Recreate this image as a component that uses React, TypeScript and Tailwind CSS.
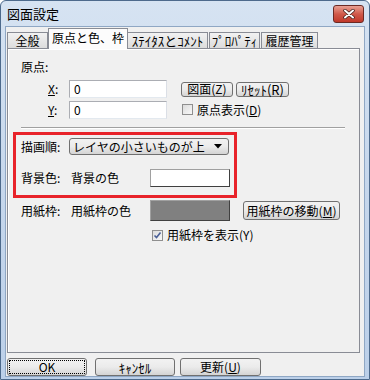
const jp = "font-['Noto_Sans_CJK_JP',sans-serif]"

function Btn({ children, className = '' }: { children: React.ReactNode; className?: string }) {
  return (
    <div
      className={`flex items-center justify-center whitespace-nowrap rounded-[3px] border border-[#707070] bg-gradient-to-b from-[#f2f2f2] via-[#ebebeb] to-[#d4d4d4] text-[12px] leading-none text-black ${className}`}
    >
      {children}
    </div>
  )
}

function Check({ checked }: { checked?: boolean }) {
  return (
    <div className="flex h-[11px] w-[11px] items-center justify-center border border-[#8f8f8f] bg-gradient-to-br from-[#dcdcdc] to-[#f8f8f8]">
      {checked && (
        <svg width="9" height="9" viewBox="0 0 9 9">
          <path d="M1.5 4.5 L3.5 6.5 L7.5 1.5" fill="none" stroke="#4a5f97" strokeWidth="1.6" />
        </svg>
      )}
    </div>
  )
}

function Input({ value }: { value: string }) {
  return (
    <div className="flex h-[18px] w-[98px] items-center border border-[#abadb3] border-b-[#e3e9ef] border-r-[#dbdfe6] bg-white pl-[4px] text-[12px] leading-none">
      {value}
    </div>
  )
}

export default function App() {
  return (
    <div className={`${jp} flex h-[380px] w-[370px] flex-col rounded-t-[6px] border border-[#4d6a8c] bg-gradient-to-b from-[#d6e3f2] via-[#c6d7ec] to-[#bcd0e9] text-black`}>
      {/* title bar */}
      <div className="flex h-[25px] shrink-0 items-start justify-between">
        <div className="pl-[6px] pt-[6px] text-[13px] leading-none">図面設定</div>
        <div className="mr-[5px] mt-[4px] flex h-[18px] w-[31px] items-center justify-center rounded-[3px] border border-[#6b2a24] bg-gradient-to-b from-[#e8a093] via-[#d0594a] to-[#c0382a]">
          <svg width="12" height="10" viewBox="0 0 12 10">
            <path d="M2 1.5 L10 8.5 M10 1.5 L2 8.5" stroke="#3a1a16" strokeWidth="3.4" strokeLinecap="round" />
            <path d="M2 1.5 L10 8.5 M10 1.5 L2 8.5" stroke="#ffffff" strokeWidth="2" strokeLinecap="round" />
          </svg>
        </div>
      </div>

      {/* client */}
      <div className="mx-[4px] mb-[4px] flex flex-1 flex-col border border-[#8fa7c4] bg-[#f0f0f0] px-[1px] pt-[1px]">
        {/* tabs */}
        <div className="flex h-[20px] items-end text-[12px] leading-none">
          <div className="flex h-[16px] w-[41px] items-center justify-center border border-b-0 border-[#898c95] bg-gradient-to-b from-[#f2f2f2] to-[#dcdcdc]">全般</div>
          <div className="z-10 -mb-[1px] flex h-[21px] w-[80px] items-center justify-center border border-b-0 border-[#898c95] bg-[#fcfcfc] pb-[2px]">原点と色、枠</div>
          <div className="flex h-[16px] w-[80px] items-center justify-center border border-b-0 border-l-0 border-[#898c95] bg-gradient-to-b from-[#f2f2f2] to-[#dcdcdc] text-[13px]">ｽﾃｲﾀｽとｺﾒﾝﾄ</div>
          <div className="ml-[1px] flex h-[16px] w-[51px] items-center justify-center border border-b-0 border-[#898c95] bg-gradient-to-b from-[#f2f2f2] to-[#dcdcdc] text-[13px]">ﾌﾟﾛﾊﾟﾃｨ</div>
          <div className="ml-[1px] flex h-[16px] w-[57px] items-center justify-center border border-b-0 border-[#898c95] bg-gradient-to-b from-[#f2f2f2] to-[#dcdcdc]">履歴管理</div>
        </div>

        {/* panel */}
        <div className="mr-[3px] flex h-[305px] flex-col border border-[#898c95] bg-[#f0f0f0] text-[12px] leading-none shadow-[inset_1px_1px_0_#ffffff]">
          <div className="pl-[13px] pt-[12px]">原点:</div>

          <div className="mt-[7px] flex h-[18px] items-center">
            <span className="ml-[40px] w-[21px]"><span className="underline">X</span>:</span>
            <Input value="0" />
            <Btn className="ml-[14px] h-[15px] w-[52px]">図面(Z)</Btn>
            <Btn className="ml-[3px] h-[15px] w-[53px] text-[13px]">ﾘｾｯﾄ(R)</Btn>
          </div>

          <div className="mt-[3px] flex h-[17px] items-center">
            <span className="ml-[40px] w-[21px]"><span className="underline">Y</span>:</span>
            <Input value="0" />
            <div className="ml-[15px] flex items-center gap-[4px]">
              <Check />
              <span>原点表示(<span className="underline">D</span>)</span>
            </div>
          </div>

          <div className="ml-[13px] mt-[9px] h-[2px] w-[324px] border-t border-[#a0a0a0] border-b-white border-b" />

          {/* highlighted group */}
          <div className="ml-[5px] mt-[3px] flex h-[66px] w-[224px] flex-col border-[3px] border-[#e8232a] pl-[5px]">
            <div className="mt-[3px] flex h-[17px] items-center">
              <span className="w-[48px]">描画順:</span>
              <div className="flex h-[17px] w-[160px] items-center justify-between rounded-[3px] border border-[#707070] bg-gradient-to-b from-[#f2f2f2] via-[#ebebeb] to-[#d4d4d4] pl-[3px] pr-[6px]">
                <span>レイヤの小さいものが上</span>
                <svg width="8" height="5" viewBox="0 0 8 5"><path d="M0 0 H8 L4 4.5 Z" fill="#000" /></svg>
              </div>
            </div>
            <div className="mt-[14px] flex h-[18px] items-center">
              <span className="w-[50px]">背景色:</span>
              <span className="w-[79px]">背景の色</span>
              <div className="h-[18px] w-[80px] border border-[#a0a0a0] border-b-[#404040] border-r-[#404040] bg-white" />
            </div>
          </div>

          <div className="mt-[2px] flex h-[21px] items-center pl-[13px]">
            <span className="w-[50px]">用紙枠:</span>
            <span className="w-[79px]">用紙枠の色</span>
            <div className="h-[21px] w-[80px] border border-[#a0a0a0] border-b-[#404040] border-r-[#404040] bg-[#808080]" />
            <Btn className="ml-[13px] h-[19px] w-[97px]">用紙枠の移動(<span className="underline">M</span>)</Btn>
          </div>

          <div className="ml-[144px] mt-[8px] flex items-center gap-[4px]">
            <Check checked />
            <span>用紙枠を表示(Y)</span>
          </div>
        </div>

        {/* footer buttons */}
        <div className="mt-[5px] flex gap-[8px] text-[12px]">
          <Btn className="h-[18px] w-[80px] border-[#3c7fb1] outline-1 outline-dotted outline-offset-[-3px] outline-black">OK</Btn>
          <Btn className="h-[18px] w-[80px] text-[13px]">ｷｬﾝｾﾙ</Btn>
          <Btn className="-ml-[3px] h-[18px] w-[81px]">更新(<span className="underline">U</span>)</Btn>
        </div>
      </div>
    </div>
  )
}
